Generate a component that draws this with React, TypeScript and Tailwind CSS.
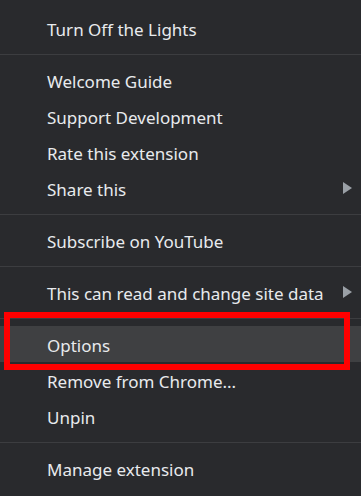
import React from "react";

type Item = { label: string; arrow?: boolean; active?: boolean };

const groups: Item[][] = [
  [{ label: "Turn Off the Lights" }],
  [
    { label: "Welcome Guide" },
    { label: "Support Development" },
    { label: "Rate this extension" },
    { label: "Share this", arrow: true },
  ],
  [{ label: "Subscribe on YouTube" }],
  [{ label: "This can read and change site data", arrow: true }],
  [
    { label: "Options", active: true },
    { label: "Remove from Chrome..." },
    { label: "Unpin" },
  ],
  [{ label: "Manage extension" }],
];

function Row({ item }: { item: Item }) {
  return (
    <div
      className={`relative flex h-[36px] items-center pl-[47px] pr-[9px] ${
        item.active ? "bg-[#3f4042]" : ""
      }`}
    >
      <span className="flex-1 whitespace-nowrap pt-[3px] text-[17px] leading-none text-[#e8eaed]">
        {item.label}
      </span>
      {item.arrow && (
        <svg width="9" height="12" viewBox="0 0 9 12" className="shrink-0">
          <path d="M0 0 L9 6 L0 12 Z" fill="#9aa0a6" />
        </svg>
      )}
      {item.active && (
        <div className="pointer-events-none absolute left-[4px] right-[11px] top-[-14px] bottom-[-8px] border-[6px] border-[#ff0000]" />
      )}
    </div>
  );
}

export default function App() {
  return (
    <div
      className="w-[361px] h-[496px] bg-[#292a2d] py-[10px] overflow-hidden"
      style={{ fontFamily: '"Noto Sans", "Open Sans", sans-serif' }}
    >
      {groups.map((g, gi) => (
        <React.Fragment key={gi}>
          {gi > 0 && (
            <div className="flex h-[16px] items-center">
              <div className="h-px w-full bg-[#3c3d40]" />
            </div>
          )}
          {g.map((it) => (
            <Row key={it.label} item={it} />
          ))}
        </React.Fragment>
      ))}
    </div>
  );
}
